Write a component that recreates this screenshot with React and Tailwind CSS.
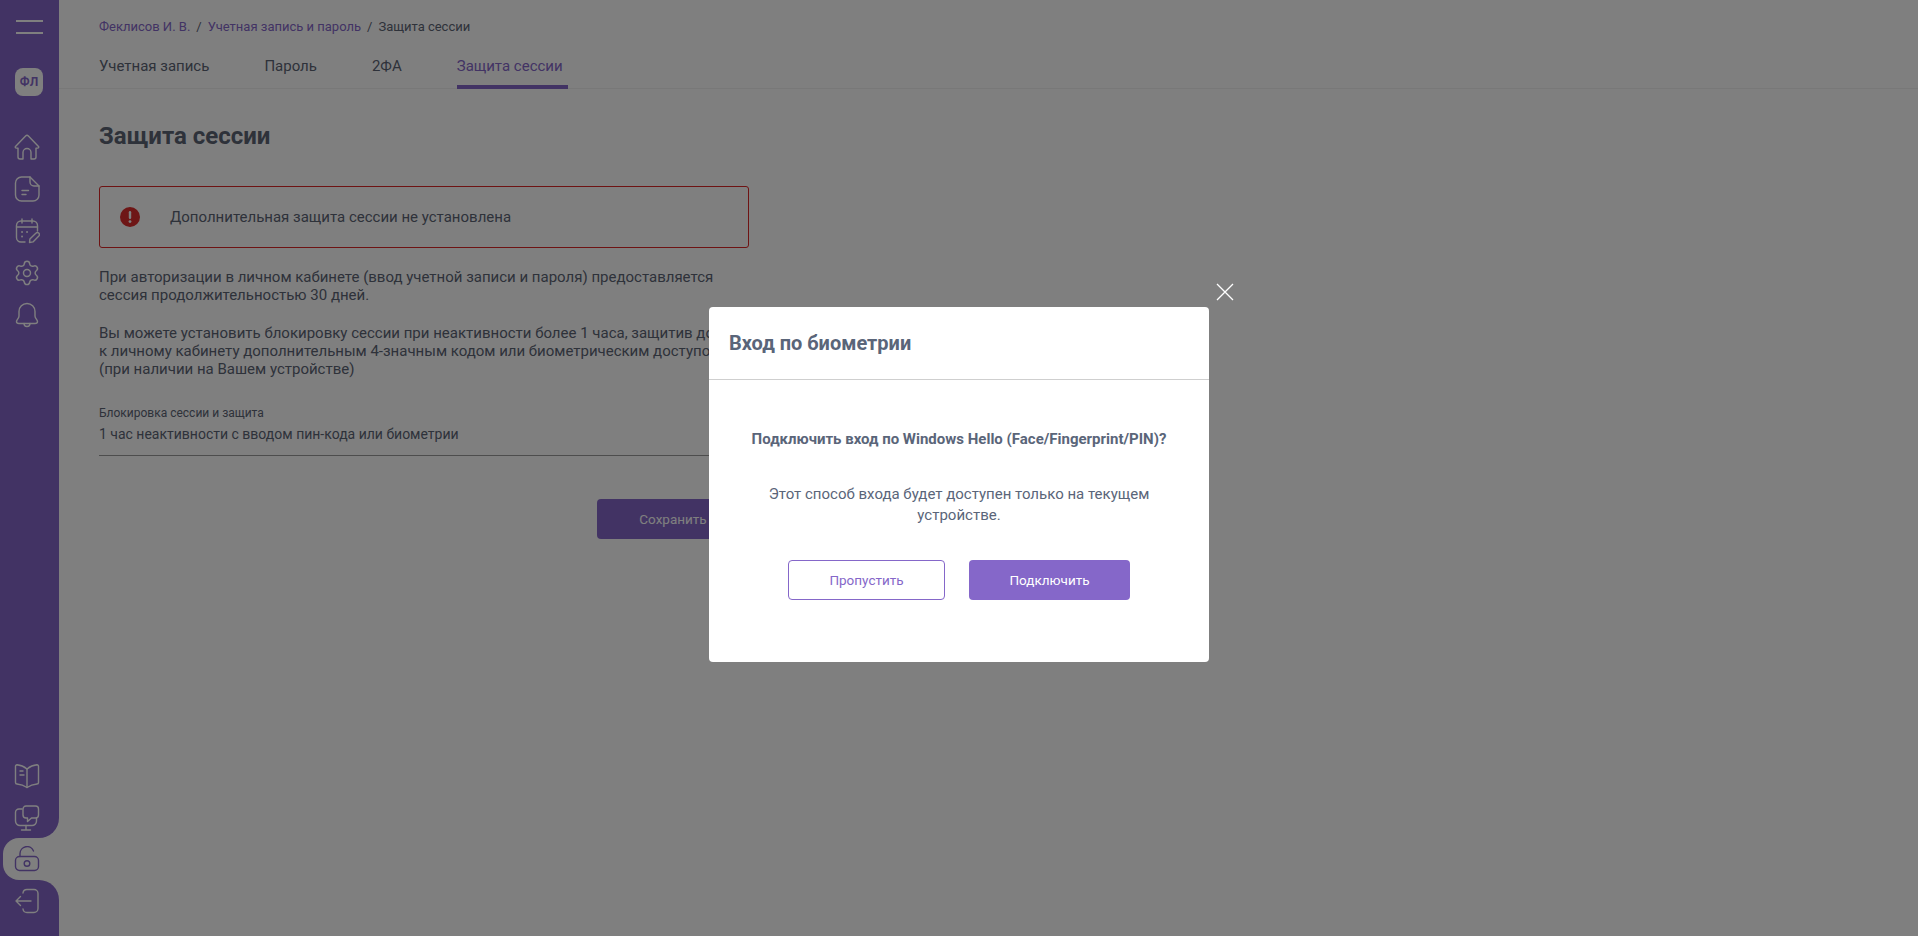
import React from 'react';
import { Settings } from 'lucide-react';

const Icon = ({ children, className = '' }) => (
    <svg viewBox="0 0 26 26" fill="none" stroke="currentColor" strokeWidth="1.4" strokeLinecap="round" strokeLinejoin="round" className={`w-[26px] h-[26px] ${className}`}>
        {children}
    </svg>
);

const HomeIcon = () => (
    <Icon>
        <path d="M1.5 12.5 L11.6 1.9 a2 2 0 0 1 2.8 0 L24.5 12.5 a1 1 0 0 1 -1 1.6 H22 V23 a2 2 0 0 1 -2 2 H17 V18.5 a4 4 0 0 0 -8 0 V25 H6 a2 2 0 0 1 -2 -2 V14.1 H2.5 a1 1 0 0 1 -1 -1.6 Z" />
    </Icon>
);

const NoteIcon = () => (
    <Icon>
        <path d="M16 1 H7.5 A6 6 0 0 0 1.5 7 V19 A6 6 0 0 0 7.5 25 H19 A6 6 0 0 0 25 19 V10 Z" />
        <path d="M16 1 V6 A4 4 0 0 0 20 10 H25" />
        <path d="M8 14.5 H14.5 M8 18.5 H12" />
    </Icon>
);

const CalendarIcon = () => (
    <Icon>
        <path d="M11 24 H7 A4.5 4.5 0 0 1 2.5 19.5 V7.5 A4.5 4.5 0 0 1 7 3 H19 A4.5 4.5 0 0 1 23.5 7.5 V13" />
        <path d="M8 1 V5 M18 1 V5 M2.5 9 H23.5" />
        <path d="M8 14 H8.1 M13 14 H13.1 M8 18.5 H8.1" strokeWidth="1.8" />
        <path d="M15.5 24.5 L15.9 21 L21.8 15.2 a1.8 1.8 0 0 1 3 2.8 L19 23.9 Z" />
    </Icon>
);

const BellIcon = () => (
    <Icon>
        <path d="M13 1.5 A8 8 0 0 0 5 9.5 V14 C5 16.5 2.5 17.5 2.5 19.5 C2.5 21 3.8 21.5 5 21.5 H21 C22.2 21.5 23.5 21 23.5 19.5 C23.5 17.5 21 16.5 21 14 V9.5 A8 8 0 0 0 13 1.5 Z" />
        <path d="M10 21.5 A3 3 0 0 0 16 21.5" />
    </Icon>
);

const BookIcon = () => (
    <Icon>
        <path d="M13 6 C10 3.5 6 2 3 1.8 A1.5 1.5 0 0 0 1.5 3.3 V19.5 A1.5 1.5 0 0 0 3 21 C6 21.3 10 22.5 13 24.5 C16 22.5 20 21.3 23 21 A1.5 1.5 0 0 0 24.5 19.5 V3.3 A1.5 1.5 0 0 0 23 1.8 C20 2 16 3.5 13 6 Z" />
        <path d="M13 6 V24.5 M6 8 H9 M6 12 H10" />
    </Icon>
);

const MonitorChatIcon = () => (
    <Icon>
        <path d="M8 4 H5 A3.5 3.5 0 0 0 1.5 7.5 V16 A4.5 4.5 0 0 0 6 20.5 H18 A4.5 4.5 0 0 0 22.5 16 V13" />
        <path d="M12 20.5 V25 M7.5 25 H16.5" />
        <path d="M12 1 H21.5 A3 3 0 0 1 24.5 4 V10 A3 3 0 0 1 21.5 13 H17.5 L13.5 16.5 V13 H12 A3 3 0 0 1 9 10 V4 A3 3 0 0 1 12 1 Z" />
    </Icon>
);

const UnlockIcon = () => (
    <Icon>
        <path d="M6 10.5 V7.5 A7 7 0 0 1 19.5 5" />
        <rect x="1.5" y="10.5" width="23" height="14" rx="4" />
        <circle cx="13" cy="17.5" r="2.8" />
    </Icon>
);

const LogoutIcon = () => (
    <Icon>
        <path d="M9 5 V5 A4 4 0 0 1 13 1.5 H20 A4 4 0 0 1 24 5.5 V20.5 A4 4 0 0 1 20 24.5 H13 A4 4 0 0 1 9 21" />
        <path d="M17 13 H2 M6.5 8.5 L2 13 L6.5 17.5" />
    </Icon>
);

function Sidebar() {
    return (
        <aside className="w-[59px] h-full shrink-0 flex flex-col text-white">
            <div className="flex-1 bg-[#8567c9] rounded-br-[20px] flex flex-col items-center">
                <div className="mt-[20px] w-[27px] flex flex-col gap-[10px] ml-[-1px]">
                    <div className="h-[2px] bg-white"></div>
                    <div className="h-[2px] bg-white"></div>
                </div>
                <div className="mt-[34px] -ml-[1px] w-[28px] h-[28px] rounded-[8px] bg-white flex items-center justify-center text-[12px] font-bold text-[#8567c9]">
                    ФЛ
                </div>
                <div className="mt-[38px] flex flex-col gap-[16px] -ml-[6px]">
                    <HomeIcon />
                    <NoteIcon />
                    <CalendarIcon />
                    <Settings className="w-[28px] h-[28px] -m-[1px]" strokeWidth={1.25} />
                    <BellIcon />
                </div>
                <div className="mt-auto mb-[7px] flex flex-col gap-[16px] -ml-[6px]">
                    <BookIcon />
                    <MonitorChatIcon />
                </div>
            </div>
            <div className="h-[42px] bg-[#8567c9]">
                <div className="h-full ml-[3px] bg-white rounded-l-[16px] flex items-center pl-[11px] text-[#8567c9]">
                    <UnlockIcon />
                </div>
            </div>
            <div className="h-[56px] bg-[#8567c9] rounded-tr-[20px] pl-[14px] pt-[8px]">
                <LogoutIcon />
            </div>
        </aside>
    );
}

function PageContent() {
    return (
        <main className="flex-1 min-w-0 text-[#5c6475]">
            <div className="h-[89px] border-b border-[#f1f1f1] pl-[40px]">
                <div className="pt-[19px] text-[13px] leading-[16px] flex gap-[6px]">
                    <span className="text-[#8567c9]">Феклисов И. В.</span>
                    <span>/</span>
                    <span className="text-[#8567c9]">Учетная запись и пароль</span>
                    <span>/</span>
                    <span>Защита сессии</span>
                </div>
                <nav className="mt-[10px] flex gap-[55px] text-[15px] leading-[20px]">
                    <span className="h-[44px] pt-[11px]">Учетная запись</span>
                    <span className="h-[44px] pt-[11px]">Пароль</span>
                    <span className="h-[44px] pt-[11px]">2ФА</span>
                    <span className="h-[44px] pt-[11px] pr-[5px] text-[#8567c9] border-b-4 border-[#8567c9]">Защита сессии</span>
                </nav>
            </div>

            <div className="ml-[40px] w-[650px]">
                <h1 className="mt-[32px] text-[24px] leading-[30px] font-bold">Защита сессии</h1>

                <div className="mt-[35px] h-[62px] border border-[#dc2626] rounded-[3px] flex items-center pl-[20px] text-[15px]">
                    <svg viewBox="0 0 20 20" className="w-[20px] h-[20px] shrink-0">
                        <circle cx="10" cy="10" r="10" fill="#dc2c2c" />
                        <rect x="8.8" y="4" width="2.4" height="8" rx="1.2" fill="#fff" />
                        <circle cx="10" cy="14.6" r="1.4" fill="#fff" />
                    </svg>
                    <span className="ml-[30px]">Дополнительная защита сессии не установлена</span>
                </div>

                <p className="mt-[20px] text-[15px] leading-[18px]">
                    При авторизации в личном кабинете (ввод учетной записи и пароля) предоставляется сессия продолжительностью 30 дней.
                </p>
                <p className="mt-[20px] text-[15px] leading-[18px]">
                    Вы можете установить блокировку сессии при неактивности более 1 часа, защитив доступ к личному кабинету дополнительным 4-значным кодом или биометрическим доступом (при наличии на Вашем устройстве)
                </p>

                <div className="mt-[27px] border-b border-[#9a9a9a] pb-[11px]">
                    <div className="text-[12px] leading-[16px]">Блокировка сессии и защита</div>
                    <div className="mt-[3px] text-[14px] leading-[20px]">1 час неактивности с вводом пин-кода или биометрии</div>
                </div>

                <div className="mt-[43px] flex justify-end">
                    <button className="w-[152px] h-[40px] rounded-[4px] bg-[#8567c9] text-white text-[13.5px]">Сохранить</button>
                </div>
            </div>
        </main>
    );
}

function BiometricModal() {
    return (
        <div className="fixed inset-0 bg-black/50 flex items-center justify-center pt-[33px]">
            <div className="relative w-[500px] h-[355px] bg-white rounded-[4px] text-[#5a6579]">
                <svg viewBox="0 0 18 18" fill="none" stroke="#fff" strokeWidth="1.3" className="absolute -top-[24px] -right-[25px] w-[18px] h-[18px]">
                    <path d="M1 1 L17 17 M17 1 L1 17" />
                </svg>
                <div className="h-[73px] border-b border-[#cfcfcf] pl-[20px] flex items-center text-[20px] font-bold">
                    Вход по биометрии
                </div>
                <div className="flex flex-col items-center text-center">
                    <p className="mt-[49px] text-[15px] leading-[20px] font-bold">
                        Подключить вход по Windows Hello (Face/Fingerprint/PIN)?
                    </p>
                    <p className="mt-[35px] w-[400px] text-[15px] leading-[21px]">
                        Этот способ входа будет доступен только на текущем устройстве.
                    </p>
                    <div className="mt-[34px] flex gap-[24px] text-[13.5px]">
                        <button className="w-[157px] h-[40px] rounded-[4px] border border-[#8567c9] text-[#8567c9]">Пропустить</button>
                        <button className="w-[161px] h-[40px] rounded-[4px] bg-[#8567c9] text-white">Подключить</button>
                    </div>
                </div>
            </div>
        </div>
    );
}

export default function App() {
    return (
        <div className="h-screen flex bg-white overflow-hidden font-['Roboto',sans-serif]">
            <Sidebar />
            <PageContent />
            <BiometricModal />
        </div>
    );
}
